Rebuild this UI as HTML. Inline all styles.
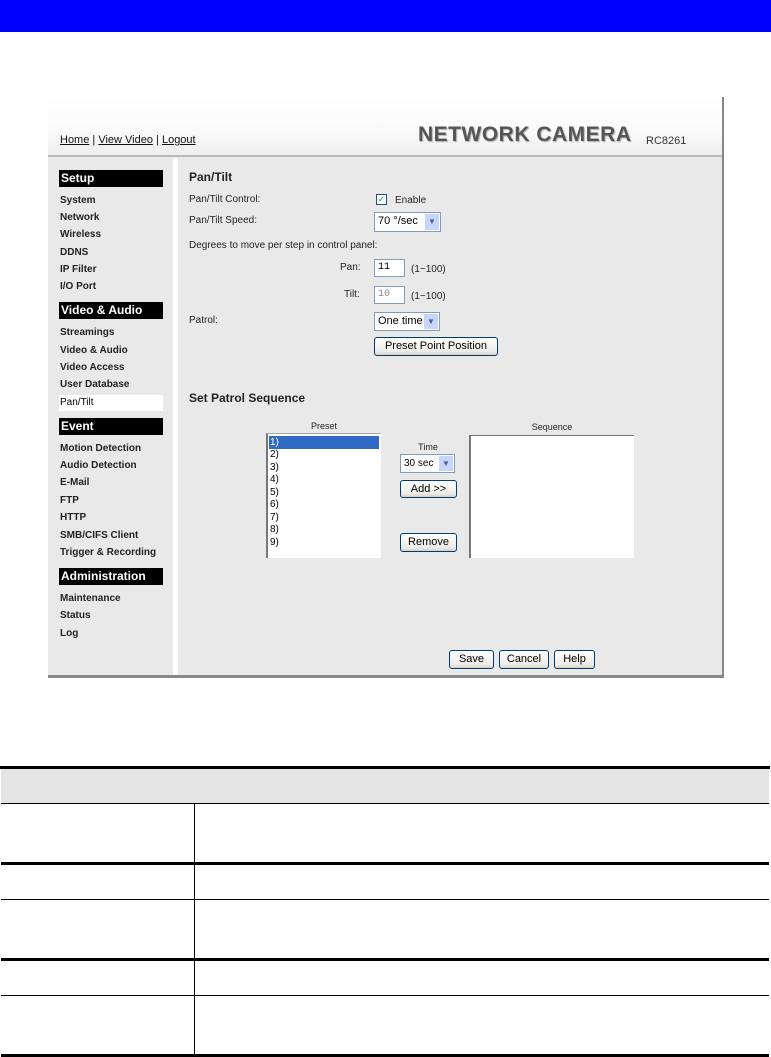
<!DOCTYPE html>
<html><head><style>
body{margin:0;width:771px;height:1057px;background:#fff;position:relative;overflow:hidden;font-family:"Liberation Sans",Arial,sans-serif;}
.a{position:absolute;}
.bar{left:0;top:0;width:771px;height:32px;background:#0000ff;}
.frame{left:48px;top:97px;width:674px;height:578px;background:#e9e9e9;border-right:2px solid #888;border-bottom:3px solid #888;}
.hdr{left:48px;top:97px;width:674px;height:58px;background:linear-gradient(#fff,#fafafa 60%,#eee);border-bottom:2px solid #bbb;}
.sep{left:173px;top:158px;width:5px;height:517px;background:#fff;}
.sh{left:59px;width:104px;height:17px;background:#000;color:#fff;font-weight:bold;font-size:12px;line-height:17px;padding-left:2px;box-sizing:border-box;}
.si{left:60px;font-size:10px;font-weight:bold;color:#222;line-height:12px;}
.t{font-size:10px;color:#222;line-height:12px;}
.inp{background:#fff;border:1px solid #7f9db9;box-sizing:border-box;font-size:11px;line-height:16px;padding-left:3px;}
.sel{background:#fff;border:1px solid #7f9db9;box-sizing:border-box;font-size:11px;line-height:17px;padding-left:3px;}
.sel i{position:absolute;right:1px;top:1px;width:14px;bottom:1px;background:#c5d5fb;font-style:normal;font-size:8px;color:#4d6185;text-align:center;line-height:15px;}
.btn{border:1px solid #003c74;border-radius:3px;background:linear-gradient(#fff,#ecebe6 80%,#d6d0c5);box-sizing:border-box;font-size:11px;text-align:center;color:#000;}
.tl{background:#000;}
</style></head><body>
<div class="a bar"></div>
<div class="a frame"></div>
<div class="a hdr"></div>
<div class="a" style="left:60px;top:134px;font-size:11px;color:#111;white-space:nowrap"><span style="text-decoration:underline">Home</span> | <span style="text-decoration:underline">View Video</span> | <span style="text-decoration:underline">Logout</span></div>
<div class="a" style="left:418px;top:123px;font-size:21px;font-weight:bold;color:#555;letter-spacing:.5px;text-shadow:1px 1px 1px #aaa;white-space:nowrap">NETWORK CAMERA</div>
<div class="a" style="left:646px;top:135px;font-size:11px;color:#333">RC8261</div>
<div class="a sep"></div>

<div class="a sh" style="top:170px">Setup</div>
<div class="a si" style="top:195px">System</div>
<div class="a si" style="top:212px">Network</div>
<div class="a si" style="top:229px">Wireless</div>
<div class="a si" style="top:247px">DDNS</div>
<div class="a si" style="top:264px">IP Filter</div>
<div class="a si" style="top:281px">I/O Port</div>
<div class="a sh" style="top:302px">Video &amp; Audio</div>
<div class="a si" style="top:327px">Streamings</div>
<div class="a si" style="top:345px">Video &amp; Audio</div>
<div class="a si" style="top:362px">Video Access</div>
<div class="a si" style="top:379px">User Database</div>
<div class="a" style="left:59px;top:395px;width:104px;height:16px;background:#fff"></div>
<div class="a si" style="top:397px;font-weight:normal;color:#000">Pan/Tilt</div>
<div class="a sh" style="top:418px">Event</div>
<div class="a si" style="top:443px">Motion Detection</div>
<div class="a si" style="top:460px">Audio Detection</div>
<div class="a si" style="top:477px">E-Mail</div>
<div class="a si" style="top:495px">FTP</div>
<div class="a si" style="top:512px">HTTP</div>
<div class="a si" style="top:530px">SMB/CIFS Client</div>
<div class="a si" style="top:547px">Trigger &amp; Recording</div>
<div class="a sh" style="top:568px">Administration</div>
<div class="a si" style="top:593px">Maintenance</div>
<div class="a si" style="top:610px">Status</div>
<div class="a si" style="top:628px">Log</div>

<div class="a" style="left:189px;top:170px;font-size:12px;font-weight:bold;color:#222">Pan/Tilt</div>
<div class="a t" style="left:189px;top:194px">Pan/Tilt Control:</div>
<div class="a" style="left:376px;top:194px;width:11px;height:11px;border:1px solid #1c5180;background:#fff;box-sizing:border-box;font-size:9px;line-height:9px;color:#21a121;text-align:center">✓</div>
<div class="a t" style="left:395px;top:195px">Enable</div>
<div class="a t" style="left:189px;top:215px">Pan/Tilt Speed:</div>
<div class="a sel" style="left:374px;top:212px;width:67px;height:20px">70 °/sec<i>▼</i></div>
<div class="a t" style="left:189px;top:240px">Degrees to move per step in control panel:</div>
<div class="a t" style="left:340px;top:262px">Pan:</div>
<div class="a inp" style="left:374px;top:259px;width:31px;height:18px;font-family:'Liberation Mono',monospace;font-size:10px">11</div>
<div class="a t" style="left:411px;top:264px">(1~100)</div>
<div class="a t" style="left:344px;top:289px">Tilt:</div>
<div class="a inp" style="left:374px;top:286px;width:31px;height:18px;font-family:'Liberation Mono',monospace;font-size:10px;color:#888">10</div>
<div class="a t" style="left:411px;top:291px">(1~100)</div>
<div class="a t" style="left:189px;top:315px">Patrol:</div>
<div class="a sel" style="left:374px;top:312px;width:66px;height:19px">One time<i>▼</i></div>
<div class="a btn" style="left:374px;top:337px;width:124px;height:19px;line-height:17px">Preset Point Position</div>
<div class="a" style="left:189px;top:391px;font-size:12px;font-weight:bold;color:#222">Set Patrol Sequence</div>

<div class="a t" style="left:266px;top:420px;width:116px;text-align:center;font-size:9px">Preset</div>
<div class="a" style="left:266px;top:433px;width:115px;height:125px;background:#fff;border-left:2px solid #777;border-top:1px solid #aaa;box-sizing:border-box;font-size:10px;line-height:13px">
<div style="background:#316ac5;color:#fff;margin:2px 2px 0 1px;height:13px;padding-left:1px">1)</div>
<div style="padding-left:2px;line-height:12.5px">2)<br>3)<br>4)<br>5)<br>6)<br>7)<br>8)<br>9)</div></div>
<div class="a t" style="left:400px;top:441px;width:56px;text-align:center;font-size:9px">Time</div>
<div class="a sel" style="left:400px;top:454px;width:55px;height:19px;font-size:10px">30 sec<i>▼</i></div>
<div class="a btn" style="left:400px;top:480px;width:57px;height:18px;line-height:16px">Add &gt;&gt;</div>
<div class="a btn" style="left:400px;top:533px;width:57px;height:19px;line-height:17px">Remove</div>
<div class="a t" style="left:469px;top:421px;width:166px;text-align:center;font-size:9px">Sequence</div>
<div class="a" style="left:469px;top:435px;width:165px;height:123px;background:#fff;border-left:2px solid #777;border-top:1px solid #777;box-sizing:border-box"></div>

<div class="a btn" style="left:449px;top:650px;width:45px;height:19px;line-height:17px">Save</div>
<div class="a btn" style="left:499px;top:650px;width:50px;height:19px;line-height:17px">Cancel</div>
<div class="a btn" style="left:554px;top:650px;width:41px;height:19px;line-height:17px">Help</div>

<div class="a" style="left:1px;top:767px;width:768px;height:37px;background:#e4e4e4"></div>
<div class="a tl" style="left:0;top:766px;width:770px;height:3px"></div>
<div class="a tl" style="left:1px;top:803px;width:768px;height:1px"></div>
<div class="a tl" style="left:1px;top:862px;width:768px;height:3px"></div>
<div class="a tl" style="left:1px;top:899px;width:768px;height:1px"></div>
<div class="a tl" style="left:1px;top:958px;width:768px;height:3px"></div>
<div class="a tl" style="left:1px;top:995px;width:768px;height:1px"></div>
<div class="a tl" style="left:1px;top:1054px;width:768px;height:3px"></div>
<div class="a tl" style="left:194px;top:804px;width:1px;height:250px"></div>
</body></html>
